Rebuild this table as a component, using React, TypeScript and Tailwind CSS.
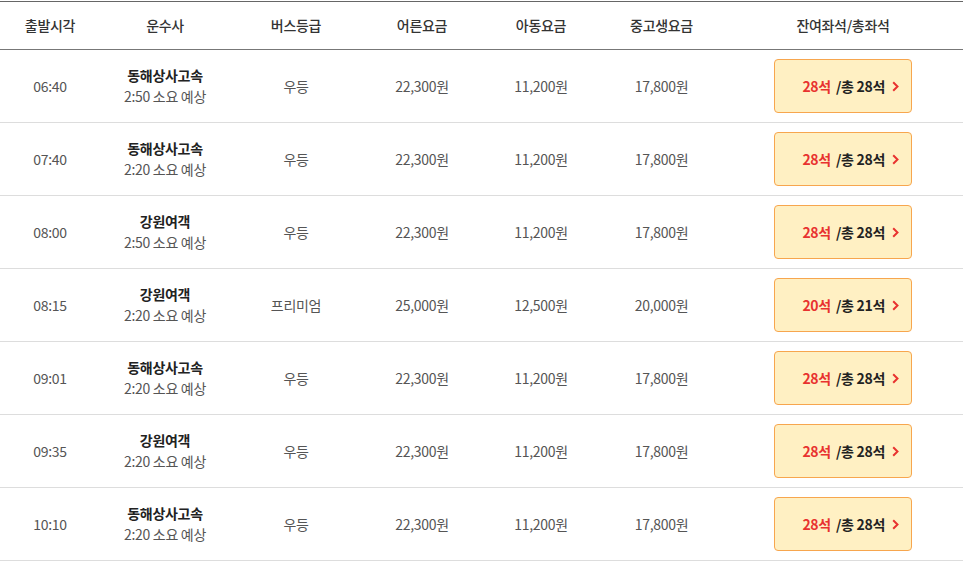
const rows = [
  { time: "06:40", company: "동해상사고속", dur: "2:50", grade: "우등", adult: "22,300원", child: "11,200원", teen: "17,800원", left: 28, total: 28 },
  { time: "07:40", company: "동해상사고속", dur: "2:20", grade: "우등", adult: "22,300원", child: "11,200원", teen: "17,800원", left: 28, total: 28 },
  { time: "08:00", company: "강원여객", dur: "2:50", grade: "우등", adult: "22,300원", child: "11,200원", teen: "17,800원", left: 28, total: 28 },
  { time: "08:15", company: "강원여객", dur: "2:20", grade: "프리미엄", adult: "25,000원", child: "12,500원", teen: "20,000원", left: 20, total: 21 },
  { time: "09:01", company: "동해상사고속", dur: "2:20", grade: "우등", adult: "22,300원", child: "11,200원", teen: "17,800원", left: 28, total: 28 },
  { time: "09:35", company: "강원여객", dur: "2:20", grade: "우등", adult: "22,300원", child: "11,200원", teen: "17,800원", left: 28, total: 28 },
  { time: "10:10", company: "동해상사고속", dur: "2:20", grade: "우등", adult: "22,300원", child: "11,200원", teen: "17,800원", left: 28, total: 28 },
]

const cols = "grid grid-cols-[100px_130px_132px_120px_118px_123px_240px]"

export default function App() {
  return (
    <div className="w-[965px] h-[569px] bg-white pt-px font-['Noto_Sans_CJK_KR','Noto_Sans',sans-serif] text-[14px]">
      <div className="w-[963px] border-t border-[#666]">
        {/* Header */}
        <div className={`${cols} h-[48px] items-center border-b border-[#777] text-[#333] font-medium tracking-[-0.3px]`}>
          <div className="text-center">출발시각</div>
          <div className="text-center">운수사</div>
          <div className="text-center">버스등급</div>
          <div className="text-center">어른요금</div>
          <div className="text-center">아동요금</div>
          <div className="text-center">중고생요금</div>
          <div className="text-center">잔여좌석/총좌석</div>
        </div>

        {/* Rows */}
        {rows.map((r, i) => (
          <div key={i} className={`${cols} h-[73px] items-center border-b border-[#ddd] text-[#555] tracking-[-0.3px]`}>
            <div className="text-center">{r.time}</div>
            <div className="flex flex-col items-center leading-[21px]">
              <span className="font-bold text-[#222]">{r.company}</span>
              <span>{r.dur} 소요 예상</span>
            </div>
            <div className="text-center">{r.grade}</div>
            <div className="text-center">{r.adult}</div>
            <div className="text-center">{r.child}</div>
            <div className="text-center">{r.teen}</div>
            <div className="flex justify-center">
              <button className="w-[138px] h-[54px] flex items-center justify-end gap-[7px] pr-[12px] rounded-[4px] border border-[#f7a64e] bg-[#fff0c3] font-bold">
                <span className="flex">
                  <span className="text-[#e8322f]">{r.left}석</span>
                  <span className="ml-[5px] text-[#222]">/총 {r.total}석</span>
                </span>
                <svg width="7" height="11" viewBox="0 0 7 11" fill="none">
                  <path d="M1.2 1.2L5.5 5.5L1.2 9.8" stroke="#e8322f" strokeWidth="2" />
                </svg>
              </button>
            </div>
          </div>
        ))}
      </div>
    </div>
  )
}
